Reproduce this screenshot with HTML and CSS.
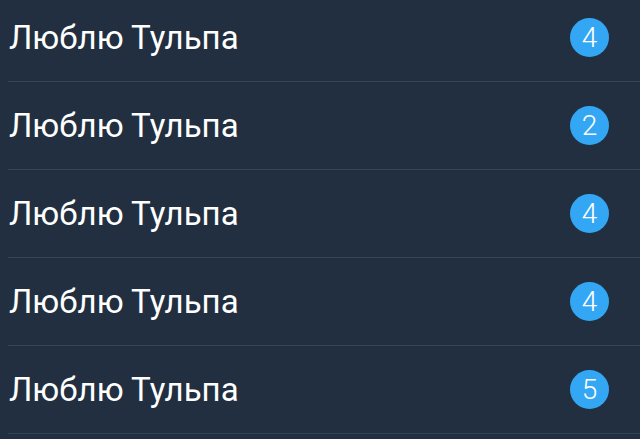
FILE: index.html
```html
<!DOCTYPE html>
<html lang="ru">
<head>
    <meta charset="UTF-8">
    <title>Список</title>
    <link rel="stylesheet" href="styles.css">
</head>
<body>
    <ul class="list">
        <li class="item"><span class="title">Люблю Тульпа</span><span class="badge">4</span></li>
        <li class="item"><span class="title">Люблю Тульпа</span><span class="badge">2</span></li>
        <li class="item"><span class="title">Люблю Тульпа</span><span class="badge">4</span></li>
        <li class="item"><span class="title">Люблю Тульпа</span><span class="badge">4</span></li>
        <li class="item"><span class="title">Люблю Тульпа</span><span class="badge">5</span></li>
    </ul>
</body>
</html>
```

FILE: styles.css
```css
html, body {
    margin: 0;
    padding: 0;
    background-color: #212f40;
    overflow: hidden;
}
body {
    font-family: Roboto, "Liberation Sans", sans-serif;
    color: #fff;
}
.list {
    list-style: none;
    margin: -6px 0 0 8px;
    padding: 0;
}
.item {
    display: flex;
    align-items: center;
    justify-content: space-between;
    height: 87px;
    border-bottom: 1px solid #34455a;
    padding: 0 31px 0 1px;
}
.title {
    font-size: 33px;
}
.badge {
    width: 39px;
    height: 39px;
    border-radius: 50%;
    background-color: #33a6f4;
    color: #fff;
    font-size: 28px;
    font-weight: 300;
    display: flex;
    align-items: center;
    justify-content: center;
}
```
